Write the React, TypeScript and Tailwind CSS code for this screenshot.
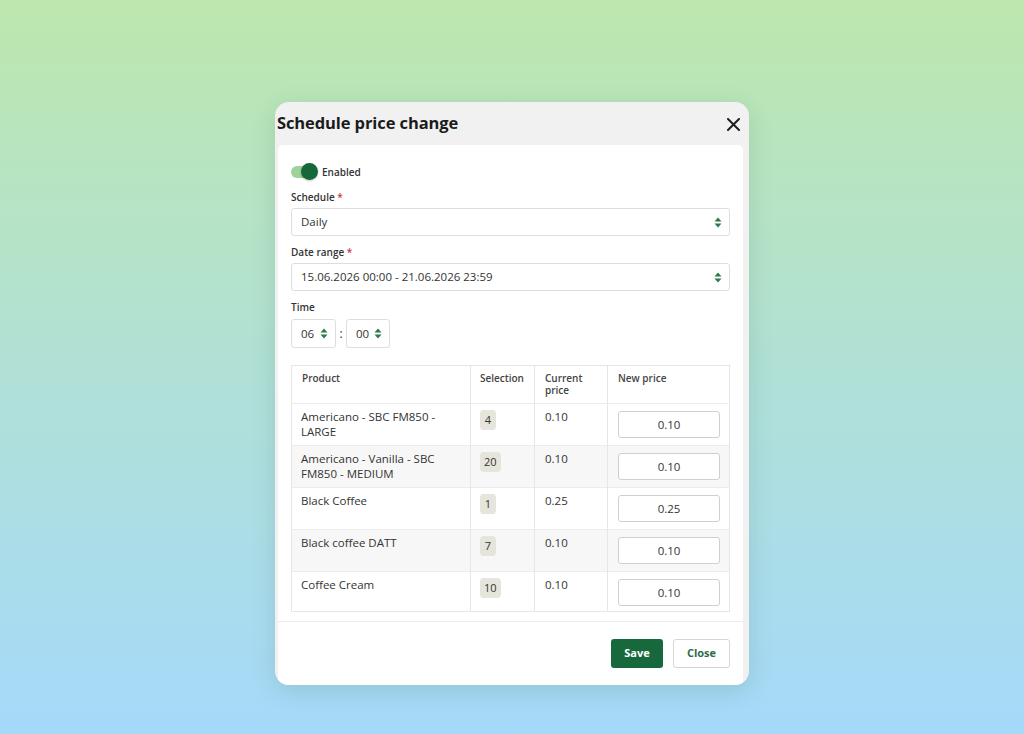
import React from 'react';

type Row = {
  name: string;
  selection: number;
  current: string;
  next: string;
};

const rows: Row[] = [
  { name: 'Americano - SBC FM850 - LARGE', selection: 4, current: '0.10', next: '0.10' },
  { name: 'Americano - Vanilla - SBC FM850 - MEDIUM', selection: 20, current: '0.10', next: '0.10' },
  { name: 'Black Coffee', selection: 1, current: '0.25', next: '0.25' },
  { name: 'Black coffee DATT', selection: 7, current: '0.10', next: '0.10' },
  { name: 'Coffee Cream', selection: 10, current: '0.10', next: '0.10' },
];

const SortIcon: React.FC = () => (
  <svg width="8" height="11" viewBox="0 0 8 11" className="shrink-0">
    <path d="M4 0.5 L7.5 4.5 H0.5 Z" fill="#2a7a4b" />
    <path d="M4 10.5 L7.5 6.5 H0.5 Z" fill="#2a7a4b" />
  </svg>
);

const Label: React.FC<{ text: string; required?: boolean }> = ({ text, required }) => (
  <div className="text-[10px] leading-[14px] font-semibold text-[#333]">
    {text}
    {required && <span className="text-[#d0344a]"> *</span>}
  </div>
);

const SelectBox: React.FC<{ value: string }> = ({ value }) => (
  <div className="mt-[4px] h-[28px] border border-[#dedede] rounded-[3px] flex items-center justify-between pl-[9px] pr-[7px] text-[11.5px] text-[#333]">
    <span>{value}</span>
    <SortIcon />
  </div>
);

const App: React.FC = () => {
  return (
    <div
      className="w-full h-[734px] flex justify-center pt-[102px] bg-gradient-to-b from-[#bde7ad] to-[#a5d9fa]"
      style={{ fontFamily: '"Open Sans", "Noto Sans", sans-serif' }}
    >
      <div className="w-[474px] h-[583px] rounded-[14px] bg-[#f1f1f1] shadow-[0_6px_24px_rgba(60,100,90,0.18)] flex flex-col overflow-hidden">
        {/* Header */}
        <div className="h-[43px] shrink-0 flex items-center justify-between pl-[2px] pr-[6px]">
          <h2 className="text-[16.5px] font-bold text-[#1b1b1b] tracking-[-0.1px]">Schedule price change</h2>
          <svg width="13" height="13" viewBox="0 0 13 13" className="mr-[3px] mt-[2px]">
            <path d="M1 1 L12 12 M12 1 L1 12" stroke="#1f1f1f" strokeWidth="2" strokeLinecap="round" />
          </svg>
        </div>

        {/* Body */}
        <div className="flex-1 ml-[3px] mr-[6px] bg-white rounded-t-[5px] flex flex-col">
          <div className="px-[13px] pt-[17px] pb-[9px]">
            {/* Toggle */}
            <div className="h-[20px] flex items-center">
              <div className="relative w-[26px] h-[12px] rounded-full bg-[#9fd19a]">
                <div className="absolute right-[-1px] top-[-3px] w-[17px] h-[17px] rounded-full bg-[#16683a] shadow-[0_1px_2px_rgba(0,0,0,0.25)]" />
              </div>
              <span className="ml-[5px] text-[10px] font-semibold text-[#333]">Enabled</span>
            </div>

            <div className="mt-[8px]">
              <Label text="Schedule" required />
              <SelectBox value="Daily" />
            </div>

            <div className="mt-[9px]">
              <Label text="Date range" required />
              <SelectBox value="15.06.2026 00:00 - 21.06.2026 23:59" />
            </div>

            <div className="mt-[9px]">
              <Label text="Time" />
              <div className="mt-[5px] flex items-center">
                <div className="w-[45px] h-[29px] border border-[#dedede] rounded-[3px] flex items-center justify-between pl-[9px] pr-[7px] text-[11.5px] text-[#333]">
                  <span>06</span>
                  <SortIcon />
                </div>
                <span className="w-[10px] text-center text-[12px] text-[#333]">:</span>
                <div className="w-[44px] h-[29px] border border-[#dedede] rounded-[3px] flex items-center justify-between pl-[9px] pr-[7px] text-[11.5px] text-[#333]">
                  <span>00</span>
                  <SortIcon />
                </div>
              </div>
            </div>

            {/* Table */}
            <table className="mt-[17px] w-full border-collapse border border-[#e6e6e6] text-[#333] table-fixed">
              <colgroup>
                <col className="w-[179px]" />
                <col className="w-[64px]" />
                <col className="w-[73px]" />
                <col />
              </colgroup>
              <thead>
                <tr className="h-[38px]">
                  <th className="align-top text-left font-semibold text-[10px] leading-[12px] pt-[6px] px-[10px] border-r border-[#e6e6e6] text-[#444]">Product</th>
                  <th className="align-top text-left font-semibold text-[10px] leading-[12px] pt-[6px] pl-[9px] pr-[4px] border-r border-[#e6e6e6] text-[#444]">Selection</th>
                  <th className="align-top text-left font-semibold text-[10px] leading-[12px] pt-[6px] px-[10px] border-r border-[#e6e6e6] text-[#444]">Current<br />price</th>
                  <th className="align-top text-left font-semibold text-[10px] leading-[12px] pt-[6px] px-[10px] text-[#444]">New price</th>
                </tr>
              </thead>
              <tbody>
                {rows.map((r, i) => (
                  <tr
                    key={r.name}
                    className={`${i === rows.length - 1 ? 'h-[40px]' : 'h-[42px]'} border-t border-[#ececec] ${i % 2 === 1 ? 'bg-[#f7f7f7]' : 'bg-white'}`}
                  >
                    <td className="align-top pt-[5px] pl-[9px] pr-[10px] text-[11.5px] leading-[15px] border-r border-[#e6e6e6]">{r.name}</td>
                    <td className="align-top pt-[6px] px-[9px] border-r border-[#e6e6e6]">
                      <div className="flex">
                        <span className="flex items-center justify-center min-w-[16px] h-[20px] px-[4px] rounded-[4px] bg-[#e5e5dc] text-[11px] text-[#333]">{r.selection}</span>
                      </div>
                    </td>
                    <td className="align-top pt-[5px] px-[10px] text-[11.5px] leading-[15px] border-r border-[#e6e6e6]">{r.current}</td>
                    <td className="align-top pt-[7px] px-[10px]">
                      <div className="w-[102px] h-[27px] border border-[#cfcfcf] rounded-[3px] bg-white flex items-center justify-center text-[11.5px] text-[#333]">{r.next}</div>
                    </td>
                  </tr>
                ))}
              </tbody>
            </table>
          </div>

          {/* Footer */}
          <div className="border-t border-[#ececec] flex justify-end gap-[10px] px-[13px] pt-[17px]">
            <button className="w-[52px] h-[29px] rounded-[3px] bg-[#17693d] text-white text-[11px] font-bold">Save</button>
            <button className="w-[57px] h-[29px] rounded-[3px] bg-white border border-[#d6d6d6] text-[#2f6b4a] text-[11px] font-bold">Close</button>
          </div>
        </div>
      </div>
    </div>
  );
};

export default App;
